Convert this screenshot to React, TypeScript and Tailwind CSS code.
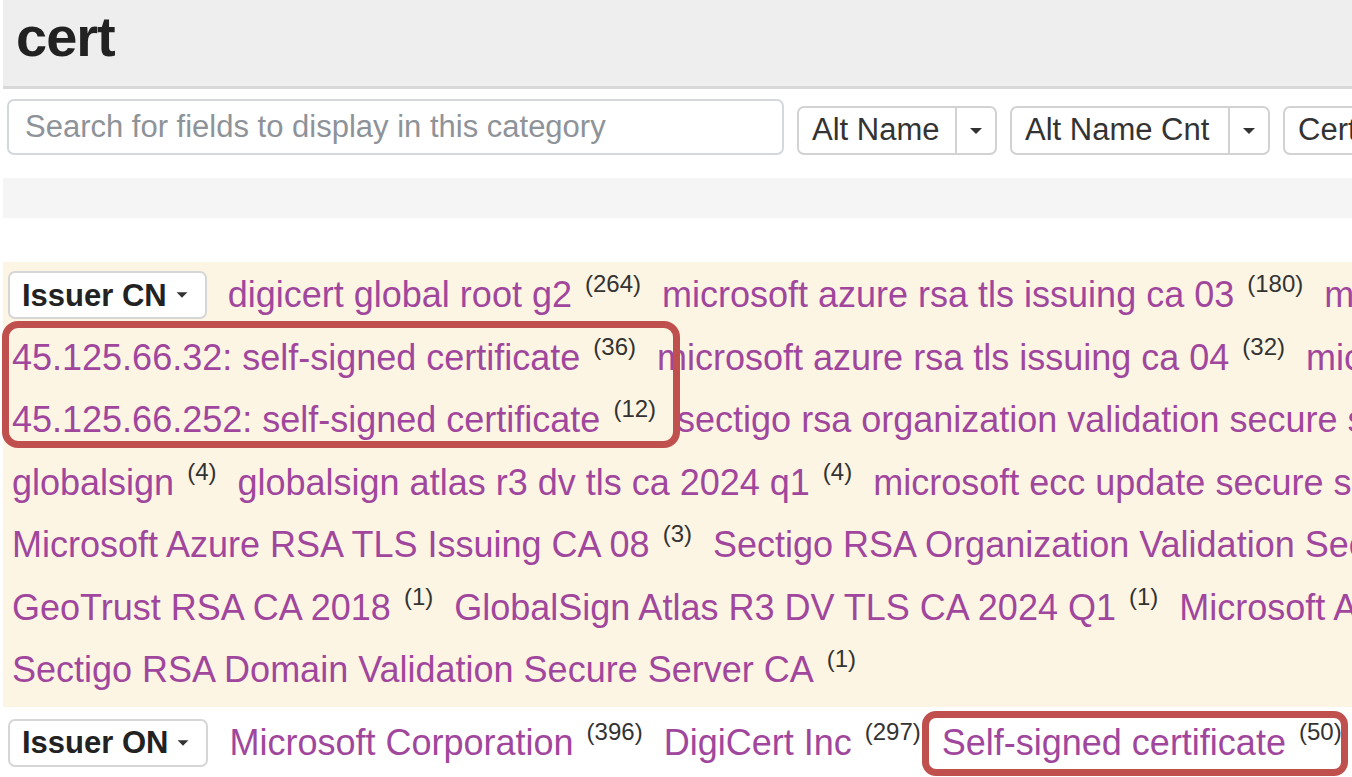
import React from 'react';

type Item = { v: string; n: number | string };

const Caret: React.FC<{ className?: string }> = ({ className = '' }) => (
    <span className={`inline-block w-0 h-0 border-l-[6px] border-r-[6px] border-t-[6px] border-l-transparent border-r-transparent border-t-[#333] ${className}`}></span>
);

const SplitButton: React.FC<{ label: string; w: string }> = ({ label, w }) => (
    <div className="flex h-[49px] border-2 border-[#d2d2d2] rounded-[7px] bg-white shrink-0">
        <div className={`${w} flex items-center px-[13px] text-[31px] text-[#333]`}>{label}</div>
        <div className="w-[40px] flex items-center justify-center border-l-2 border-[#d2d2d2]">
            <Caret />
        </div>
    </div>
);

const FieldButton: React.FC<{ label: string }> = ({ label }) => (
    <span className="inline-flex items-center h-[48px] align-middle border-2 border-[#d6d6d6] rounded-[7px] bg-white pl-[12px] pr-[17px] text-[31px] font-bold text-[#222] leading-none -mt-[4px]">
        {label}
        <Caret className="ml-[9px] scale-90" />
    </span>
);

const Value: React.FC<{ item: Item; first?: boolean }> = ({ item, first }) => (
    <span className={first ? '' : 'ml-[21px]'}>
        <span className="text-[#a0479d]">{item.v}</span>
        <span className="relative -top-[15px] ml-[13px] text-[24px] text-[#333]">({item.n})</span>
    </span>
);

const lines: { button?: string; items: Item[] }[] = [
    {
        button: 'Issuer CN',
        items: [
            { v: 'digicert global root g2', n: 264 },
            { v: 'microsoft azure rsa tls issuing ca 03', n: 180 },
            { v: 'microsoft azure rsa tls issuing ca 05', n: 96 },
        ],
    },
    {
        items: [
            { v: '45.125.66.32: self-signed certificate', n: 36 },
            { v: 'microsoft azure rsa tls issuing ca 04', n: 32 },
            { v: 'microsoft azure rsa tls issuing ca 07', n: 20 },
        ],
    },
    {
        items: [
            { v: '45.125.66.252: self-signed certificate', n: 12 },
            { v: 'sectigo rsa organization validation secure server ca', n: 8 },
        ],
    },
    {
        items: [
            { v: 'globalsign', n: 4 },
            { v: 'globalsign atlas r3 dv tls ca 2024 q1', n: 4 },
            { v: 'microsoft ecc update secure server ca 2.1', n: 4 },
        ],
    },
    {
        items: [
            { v: 'Microsoft Azure RSA TLS Issuing CA 08', n: 3 },
            { v: 'Sectigo RSA Organization Validation Secure Server CA', n: 2 },
        ],
    },
    {
        items: [
            { v: 'GeoTrust RSA CA 2018', n: 1 },
            { v: 'GlobalSign Atlas R3 DV TLS CA 2024 Q1', n: 1 },
            { v: 'Microsoft Azure RSA TLS Issuing CA 04', n: 1 },
        ],
    },
    {
        items: [{ v: 'Sectigo RSA Domain Validation Secure Server CA', n: 1 }],
    },
];

const onLine: Item[] = [
    { v: 'Microsoft Corporation', n: 396 },
    { v: 'DigiCert Inc', n: 297 },
    { v: 'Self-signed certificate', n: 50 },
];

export default function App() {
    return (
        <div className="relative w-[1352px] h-[777px] overflow-hidden bg-white pl-[3px] font-['Liberation_Sans',Arial,sans-serif]">
            <div className="h-[89px] bg-[#eeeeee] border-b-[3px] border-[#d8d8d8] pl-[13px] pt-[9px]">
                <h1 className="text-[56px] font-bold leading-none text-[#222] tracking-[-1px]">cert</h1>
            </div>

            <div className="flex items-end gap-[13px] mt-[10px] pl-[4px] whitespace-nowrap">
                <input
                    className="w-[777px] h-[56px] shrink-0 border-2 border-[#d4d8dd] rounded-[7px] px-[16px] text-[31px] outline-none placeholder:text-[#8e9399]"
                    placeholder="Search for fields to display in this category"
                />
                <SplitButton label="Alt Name" w="w-[156px]" />
                <SplitButton label="Alt Name Cnt" w="w-[216px]" />
                <SplitButton label="Cert Hash" w="w-[180px]" />
            </div>

            <div className="h-[40px] bg-[#f5f5f5] mt-[23px]"></div>

            <div className="mt-[44px] bg-[#fdf5e4] pt-[2px] pb-[5px]">
                {lines.map((line, i) => (
                    <div
                        key={i}
                        className={`h-[62.5px] leading-[62.5px] whitespace-nowrap overflow-hidden text-[36px] ${line.button ? 'pl-[5px]' : 'pl-[9px]'}`}
                    >
                        {line.button && <FieldButton label={line.button} />}
                        {line.items.map((item, j) => (
                            <Value key={j} item={item} first={j === 0 && !line.button} />
                        ))}
                    </div>
                ))}
            </div>

            <div className="mt-[5px] h-[62.5px] leading-[62.5px] whitespace-nowrap overflow-hidden text-[36px] pl-[5px]">
                <FieldButton label="Issuer ON" />
                {onLine.map((item, j) => (
                    <Value key={j} item={item} />
                ))}
            </div>

            <div className="absolute left-[2px] top-[321px] w-[678px] h-[127px] border-[7px] border-[#c0504d] rounded-[16px]"></div>
            <div className="absolute left-[922px] top-[711px] w-[426px] h-[65px] border-[7px] border-[#c0504d] rounded-[14px]"></div>
        </div>
    );
}
